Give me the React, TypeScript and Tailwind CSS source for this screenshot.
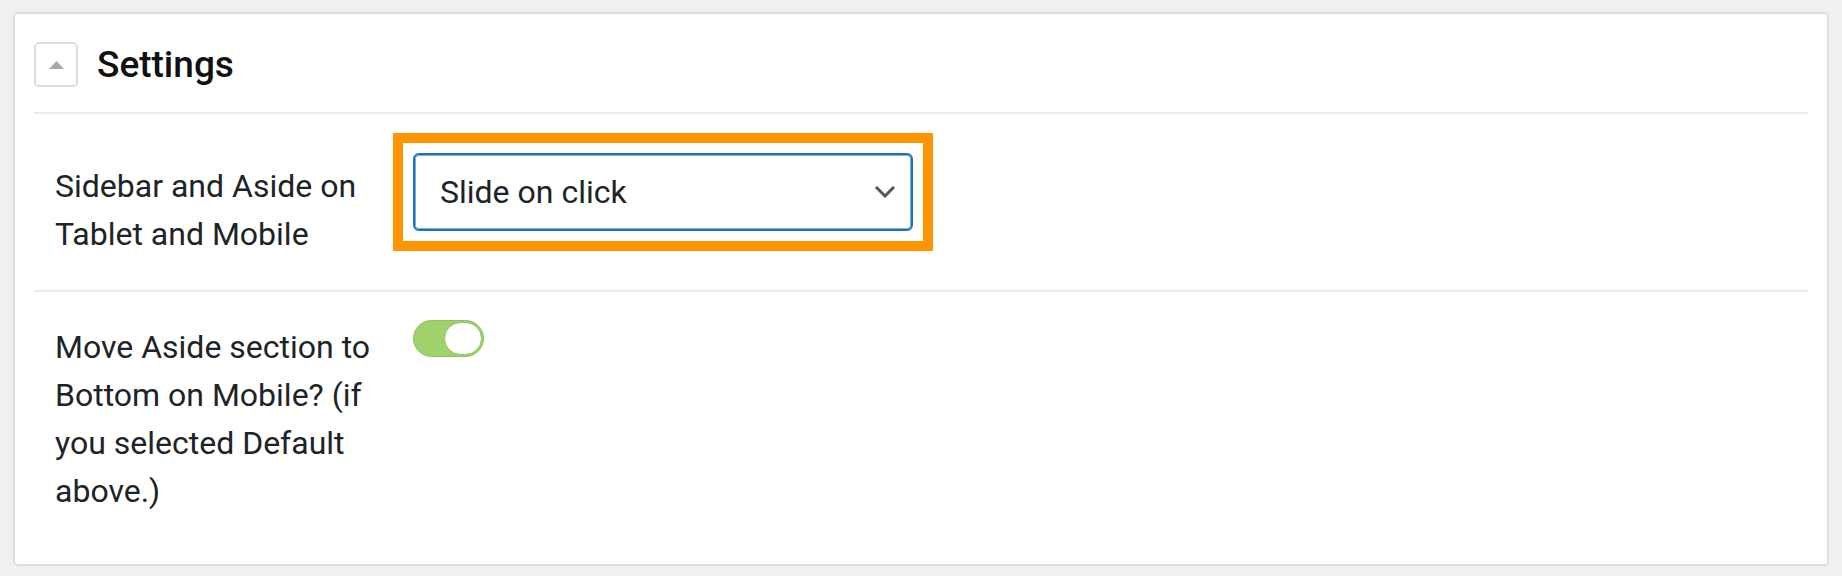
// Settings panel: collapsible header, a select row (highlighted) and a toggle row.

const FONT = { fontFamily: "Roboto, 'Liberation Sans', Arial, sans-serif" };

function ChevronDown() {
  return (
    <svg width="20" height="12" viewBox="0 0 20 12" fill="none" aria-hidden>
      <path d="M2 2l8 8 8-8" stroke="#50575e" strokeWidth="3" strokeLinecap="square" />
    </svg>
  );
}

function Toggle({ on }: { on: boolean }) {
  return (
    <div
      className={`flex h-[37px] w-[71px] items-center rounded-full border p-[1px] ${
        on ? "justify-end border-[#8cc45a] bg-[#9fd26b]" : "justify-start border-gray-300 bg-gray-200"
      }`}
    >
      <span className="h-[33px] w-[38px] rounded-full border border-[#8cc45a] bg-white" />
    </div>
  );
}

export default function App() {
  return (
    <div className="min-h-[576px] bg-[#f0f0f0] px-[13px] pt-[12px] pb-[11px] text-[#1d2327]" style={FONT}>
      <div className="rounded-[5px] border-2 border-[#dedede] bg-white px-[19px]">
        {/* Header */}
        <div className="flex items-center gap-[19px] pt-[28px] pb-[25px]">
          <button className="flex h-[45px] w-[44px] items-center justify-center rounded-[5px] border-2 border-[#dcdcde] bg-white">
            <svg width="15" height="8" viewBox="0 0 15 8" aria-hidden>
              <path d="M7.5 0L15 8H0z" fill="#a7aaad" />
            </svg>
          </button>
          <h2 className="text-[37px] font-medium leading-none text-[#111]">Settings</h2>
        </div>

        {/* Row: select */}
        <div className="grid grid-cols-[379px_1fr] items-start border-t-2 border-[#ebebeb]">
          <div className="pt-[48px] pb-[32px] pl-[21px] pr-[20px] text-[32px] leading-[48px]">
            Sidebar and Aside on Tablet and Mobile
          </div>
          <div className="pt-[39px]">
            <div className="relative w-[500px]">
              <span className="pointer-events-none absolute -inset-[20px] border-[10px] border-[#fe9400]" />
              <div className="flex h-[78px] items-center justify-between rounded-[6px] border-2 border-[#2271b1] bg-white pl-[25px] pr-[16px] text-[32px] shadow-[inset_0_0_0_1px_#72aee6]">
                <span>Slide on click</span>
                <ChevronDown />
              </div>
            </div>
          </div>
        </div>

        {/* Row: toggle */}
        <div className="grid grid-cols-[379px_1fr] items-start border-t-2 border-[#ebebeb]">
          <div className="pt-[31px] pb-[49px] pl-[21px] pr-[20px] text-[32px] leading-[48px]">
            Move Aside section to Bottom on Mobile? (if you selected Default above.)
          </div>
          <div className="pt-[28px]">
            <Toggle on />
          </div>
        </div>
      </div>
    </div>
  );
}
